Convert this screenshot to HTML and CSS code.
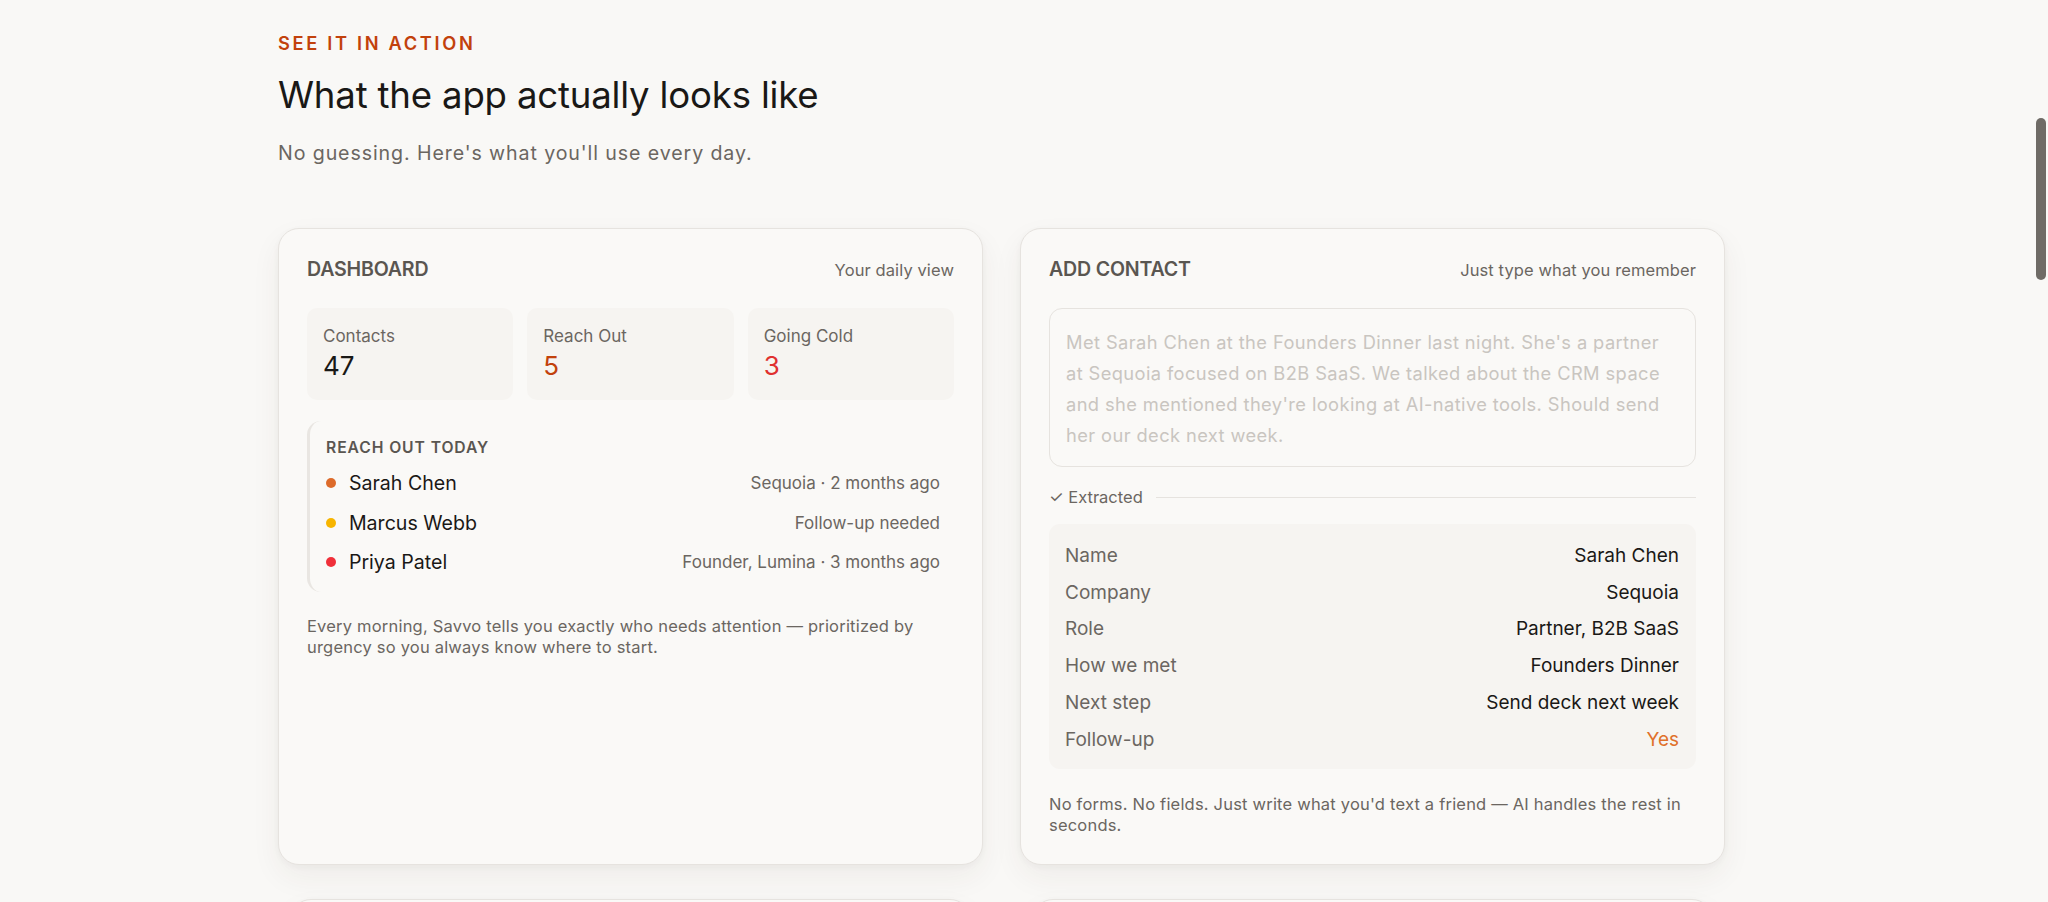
FILE: index.html
```html
<!DOCTYPE html>
<html lang="en">
<head>
<meta charset="utf-8">
<title>See it in action</title>
<link rel="stylesheet" href="styles.css">
</head>
<body>
<main class="section">
  <p class="eyebrow">SEE IT IN ACTION</p>
  <h2 class="title">What the app actually looks like</h2>
  <p class="subtitle">No guessing. Here's what you'll use every day.</p>

  <div class="grid">
    <article class="card">
      <header class="card-head">
        <span class="card-label">DASHBOARD</span>
        <span class="card-hint">Your daily view</span>
      </header>
      <div class="stats">
        <div class="stat">
          <div class="stat-label">Contacts</div>
          <div class="stat-num">47</div>
        </div>
        <div class="stat">
          <div class="stat-label">Reach Out</div>
          <div class="stat-num stat-num--orange">5</div>
        </div>
        <div class="stat">
          <div class="stat-label">Going Cold</div>
          <div class="stat-num stat-num--red">3</div>
        </div>
      </div>
      <div class="reach">
        <div class="reach-title">REACH OUT TODAY</div>
        <div class="reach-row">
          <span class="dot dot--orange"></span>
          <span class="reach-name">Sarah Chen</span>
          <span class="reach-meta">Sequoia · 2 months ago</span>
        </div>
        <div class="reach-row">
          <span class="dot dot--yellow"></span>
          <span class="reach-name">Marcus Webb</span>
          <span class="reach-meta">Follow-up needed</span>
        </div>
        <div class="reach-row">
          <span class="dot dot--red"></span>
          <span class="reach-name">Priya Patel</span>
          <span class="reach-meta">Founder, Lumina · 3 months ago</span>
        </div>
      </div>
      <p class="card-foot">Every morning, Savvo tells you exactly who needs attention — prioritized by urgency so you always know where to start.</p>
    </article>

    <article class="card">
      <header class="card-head">
        <span class="card-label">ADD CONTACT</span>
        <span class="card-hint">Just type what you remember</span>
      </header>
      <div class="note">Met Sarah Chen at the Founders Dinner last night. She's a partner at Sequoia focused on B2B SaaS. We talked about the CRM space and she mentioned they're looking at AI-native tools. Should send her our deck next week.</div>
      <div class="extracted">
        <span class="extracted-text">✓ Extracted</span>
        <span class="extracted-line"></span>
      </div>
      <div class="fields">
        <div class="field"><span class="field-key">Name</span><span class="field-val">Sarah Chen</span></div>
        <div class="field"><span class="field-key">Company</span><span class="field-val">Sequoia</span></div>
        <div class="field"><span class="field-key">Role</span><span class="field-val">Partner, B2B SaaS</span></div>
        <div class="field"><span class="field-key">How we met</span><span class="field-val">Founders Dinner</span></div>
        <div class="field"><span class="field-key">Next step</span><span class="field-val">Send deck next week</span></div>
        <div class="field"><span class="field-key">Follow-up</span><span class="field-val field-val--yes">Yes</span></div>
      </div>
      <p class="card-foot card-foot--right">No forms. No fields. Just write what you'd text a friend — AI handles the rest in seconds.</p>
    </article>

    <article class="card card--next"></article>
    <article class="card card--next"></article>
  </div>
</main>
<div class="scroll-thumb"></div>
</body>
</html>
```

FILE: styles.css
```css
* { box-sizing: border-box; }

html, body {
  margin: 0;
  padding: 0;
  height: 902px;
  overflow: hidden;
  background: #f9f8f6;
  font-family: Inter, "Noto Sans", "Liberation Sans", sans-serif;
  color: #1c1a18;
}

.section {
  padding: 31px 0 0 278px;
  width: 1725px;
}

.eyebrow {
  margin: 0;
  font-size: 18.3px;
  line-height: 24px;
  font-weight: 600;
  letter-spacing: 0.145em;
  color: #c2410c;
}

.title {
  margin: 18px 0 0;
  font-size: 36.6px;
  line-height: 44px;
  font-weight: 400;
  letter-spacing: -0.005em;
  color: #1a1816;
}

.subtitle {
  margin: 22px 0 0;
  font-size: 19.6px;
  line-height: 29px;
  font-weight: 400;
  letter-spacing: 0.9px;
  color: #6b6661;
}

.grid {
  margin-top: 60px;
  display: grid;
  grid-template-columns: 705px 705px;
  column-gap: 37px;
  row-gap: 34px;
}

.card {
  background: #faf9f7;
  border: 1px solid #e6e3df;
  border-radius: 21px;
  padding: 28px 28px 28px;
  box-shadow: 0 12px 30px rgba(60, 50, 40, 0.06), 0 2px 6px rgba(60, 50, 40, 0.04);
  display: flex;
  flex-direction: column;
}

.card--next {
  margin: 0 12px;
  height: 300px;
}

.card-head {
  display: flex;
  justify-content: space-between;
  align-items: baseline;
  line-height: 25.5px;
}

.card-label {
  font-size: 19.6px;
  font-weight: 600;
  color: #5a5651;
  letter-spacing: -0.01em;
}

.card-hint {
  font-size: 16.5px;
  letter-spacing: 0.1px;
  color: #6b6661;
}

.stats {
  margin-top: 24.5px;
  display: grid;
  grid-template-columns: repeat(3, 1fr);
  gap: 14px;
}

.stat {
  background: #f6f4f1;
  border-radius: 10px;
  padding: 17px 16px 18px;
  height: 92px;
}

.stat-label {
  font-size: 17px;
  line-height: 22px;
  color: #6b6661;
}

.stat-num {
  margin-top: 3px;
  font-size: 26px;
  line-height: 32px;
  color: #1a1816;
}

.stat-num--orange { color: #c2410c; }
.stat-num--red { color: #e0302f; }

.reach {
  margin-top: 21px;
  border-left: 3px solid #e9e6e2;
  border-radius: 14px;
  padding: 17px 14px 10px 16px;
}

.reach-title {
  font-size: 15.7px;
  line-height: 20px;
  font-weight: 600;
  letter-spacing: 0.9px;
  color: #5a5651;
  margin-bottom: 5.5px;
}

.reach-row {
  display: flex;
  align-items: center;
  height: 39.5px;
}

.dot {
  width: 10.4px;
  height: 10.4px;
  border-radius: 50%;
  margin-right: 12.5px;
  flex: none;
}

.dot--orange { background: #dd6b2a; }
.dot--yellow { background: #f7b500; }
.dot--red { background: #f0303a; }

.reach-name {
  font-size: 19.6px;
  color: #1a1816;
}

.reach-meta {
  margin-left: auto;
  font-size: 17px;
  color: #6b6661;
}

.card-foot {
  margin: 24px 0 0;
  font-size: 16.5px;
  line-height: 21px;
  letter-spacing: 0.2px;
  color: #6b6661;
}

.card-foot--right {
  margin-top: 25px;
}

.note {
  margin-top: 24.5px;
  border: 1px solid #e6e3df;
  border-radius: 13px;
  padding: 18px 16px 14px;
  height: 159px;
  font-size: 18.3px;
  line-height: 31px;
  letter-spacing: 0.4px;
  color: #c9c5c0;
}

.extracted {
  margin-top: 19.5px;
  display: flex;
  align-items: center;
  gap: 13px;
  line-height: 21px;
}

.extracted-text {
  font-size: 16.5px;
  color: #6b6661;
}

.extracted-line {
  flex: 1;
  height: 1px;
  background: #e6e3df;
}

.fields {
  margin-top: 16.5px;
  background: #f6f4f1;
  border-radius: 11px;
  padding: 13px 17px 11px 16px;
}

.field {
  display: flex;
  justify-content: space-between;
  align-items: center;
  height: 36.8px;
  font-size: 19px;
}

.field-key { color: #6b6661; }
.field-val { color: #1a1816; }
.field-val--yes { color: #e0702a; }

.scroll-thumb {
  position: fixed;
  top: 118px;
  right: 2px;
  width: 10px;
  height: 162px;
  border-radius: 5px;
  background: #6f6b66;
}
```
